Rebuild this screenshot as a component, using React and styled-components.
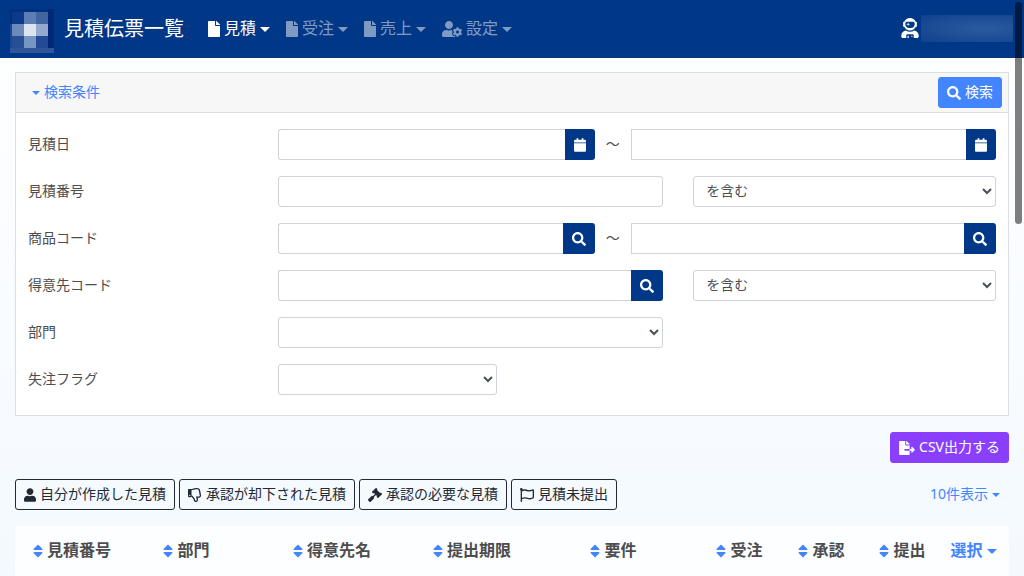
import React from "react";
import styled, { createGlobalStyle, css } from "styled-components";
import {
  FaFile,
  FaUserCog,
  FaUserAstronaut,
  FaSearch,
  FaCalendar,
  FaFileExport,
  FaUser,
  FaRegThumbsDown,
  FaGavel,
  FaRegFlag,
  FaSort,
} from "react-icons/fa";

const navy = "#003787";
const blue = "#4285ff";

const GlobalStyle = createGlobalStyle`
  *, *::before, *::after { box-sizing: border-box; }
  body {
    margin: 0;
    min-height: 100vh;
    background: linear-gradient(#ffffff, #f7fbff 70%, #f3f9fe) no-repeat;
    color: #4d4d4d;
    font-family: "Noto Sans", "Noto Sans CJK JP", sans-serif;
    font-size: 14px;
    line-height: 21px;
  }
  button, input, select { font: inherit; margin: 0; }
  button { cursor: pointer; }
`;

const Navbar = styled.header`
  display: flex;
  align-items: center;
  height: 58px;
  padding: 0 11px 0 10px;
  background: ${navy};
`;

const Brand = styled.a`
  display: flex;
  align-items: center;
  gap: 10px;
  margin-right: 16px;
  padding-top: 4px;
  color: #fff;
  text-decoration: none;
`;

const PageTitle = styled.h1`
  margin: 0;
  padding-bottom: 4px;
  font-size: 20px;
  line-height: 30px;
  font-weight: 400;
`;

const Nav = styled.nav`
  display: flex;
  flex: 1;
`;

const NavItem = styled.button`
  display: flex;
  align-items: center;
  gap: 4px;
  padding: 8px;
  border: 0;
  background: none;
  font-size: 16px;
  line-height: 24px;
  color: ${(p) => (p.$active ? "#fff" : "rgba(255, 255, 255, 0.5)")};
`;

/* Lifts CJK text to sit optically centred beside an icon. */
const Text = styled.span`
  padding-bottom: 2px;
`;

const Caret = styled.span`
  border: solid transparent;
  border-width: ${(p) => (p.$small ? "4px 4px 0" : "5px 5px 0")};
  border-top-color: currentColor;
`;

const IconBox = styled.span`
  display: block;
  flex: none;
  width: ${(p) => p.$w}px;
  height: ${(p) => p.$h}px;

  svg {
    display: block;
    width: 100%;
    height: 100%;
  }
`;

const UserMenu = styled.button`
  display: flex;
  align-items: center;
  gap: 2px;
  padding: 0 0 2px;
  border: 0;
  background: none;
  color: #fff;
`;

const UserName = styled.span`
  width: 92px;
  height: 27px;
  background: radial-gradient(ellipse at 70% 50%, #2a5a9f, #1d4d95 55%, #0d4190);
`;

const Main = styled.main`
  padding: 14px 15px 0;
`;

const Card = styled.form`
  border: 1px solid #dcdfe0;
  background: #fff;
`;

const CardHeader = styled.div`
  display: flex;
  align-items: center;
  justify-content: space-between;
  padding: 4px 6px 4px 7px;
  border-bottom: 1px solid #dcdfe0;
  background: #f7f7f7;
`;

const LinkButton = styled.button`
  display: inline-flex;
  align-items: center;
  gap: 4px;
  padding: 4px 9px;
  border: 0;
  background: none;
  color: ${blue};
  ${(p) =>
    p.$heading &&
    css`
      padding: 0;
      font-size: 16px;
      line-height: 24px;
      font-weight: 700;
    `}
`;

const variants = {
  primary: css`
    border-color: ${blue};
    background: ${blue};
    color: #fff;
  `,
  purple: css`
    border-color: #8a3ffc;
    background: #8a3ffc;
    color: #fff;
  `,
  outline: css`
    border-color: #212934;
    background: transparent;
    color: #212934;
  `,
};

const Button = styled.button`
  display: inline-flex;
  align-items: center;
  gap: 4px;
  height: 31px;
  padding: 0 8px;
  border: 1px solid;
  border-radius: 3px;
  white-space: nowrap;
  ${(p) => variants[p.$variant]}
`;

const Fields = styled.div`
  display: grid;
  gap: 16px;
  padding: 16px 12px 20px;
`;

const FieldRow = styled.div`
  display: grid;
  grid-template-columns: repeat(12, minmax(0, 1fr));
  column-gap: 30px;
  align-items: center;
`;

const Label = styled.label`
  grid-column: span 3;
  padding-bottom: 2px;
`;

const Cell = styled.div`
  display: flex;
  grid-column: span ${(p) => p.$span};
`;

const InputGroup = styled.div`
  display: flex;
  flex: ${(p) => p.$grow || 1} 1 0;
  min-width: 0;
`;

const controlBox = css`
  width: 100%;
  min-width: 0;
  height: 31px;
  padding: 3px 8px 5px;
  border: 1px solid #ced4da;
  border-radius: 3px;
  background: #fff;
  color: #495057;
`;

const TextInput = styled.input`
  ${controlBox}
  ${(p) => p.$joined && "border-right: 0; border-radius: 3px 0 0 3px;"}
  ${(p) => p.$square && "border-radius: 0;"}
`;

const Select = styled.select`
  ${controlBox}
`;

const AddonButton = styled.button`
  display: flex;
  align-items: center;
  padding: 0 9px;
  border: 0;
  border-radius: 0 3px 3px 0;
  background: ${navy};
  color: #fff;
`;

const Tilde = styled.span`
  flex: none;
  width: 36px;
  line-height: 29px;
  text-align: center;
`;

const Actions = styled.div`
  display: flex;
  justify-content: flex-end;
  padding: 16px 0;
`;

const Toolbar = styled.div`
  display: flex;
  align-items: center;
  justify-content: space-between;
  margin-bottom: 16px;
`;

const Filters = styled.div`
  display: flex;
  gap: 4px;
`;

const Table = styled.table`
  width: 100%;
  table-layout: fixed;
  border-collapse: collapse;
  background: rgba(255, 255, 255, 0.8);
`;

const HeadCell = styled.th`
  width: ${(p) => p.$width}px;
  height: 50px;
  padding: 0;
  text-align: center;
  white-space: nowrap;
`;

const SortButton = styled.button`
  display: inline-flex;
  align-items: center;
  gap: 4px;
  padding: 0;
  border: 0;
  background: none;
  color: inherit;
  font-size: 16px;
  line-height: 24px;
  font-weight: 700;

  svg { color: ${blue}; }
`;

const ScrollThumb = styled.div`
  position: fixed;
  top: 2px;
  right: 2px;
  width: 7px;
  height: 222px;
  border-radius: 4px;
  background: rgba(0, 0, 0, 0.5);
`;

const Icon = ({ glyph: Glyph, w, size = 14 }) => (
  <IconBox $w={w} $h={size}>
    <Glyph aria-hidden="true" />
  </IconBox>
);

const Logo = () => (
  <svg width="44" height="44" viewBox="0 0 44 44" shapeRendering="crispEdges" aria-hidden="true">
    <rect width="44" height="44" fill="#00307f" />
    <rect x="2" y="3" width="12" height="12" fill="#0b3a88" />
    <rect x="14" y="3" width="12" height="12" fill="#5c7db3" />
    <rect x="26" y="3" width="12" height="12" fill="#41659f" />
    <rect x="38" y="0" width="6" height="39" fill="#002878" />
    <rect x="2" y="15" width="12" height="12" fill="#6d8abb" />
    <rect x="14" y="15" width="12" height="12" fill="#dbe4f0" />
    <rect x="26" y="15" width="12" height="12" fill="#95a9cf" />
    <rect x="0" y="15" width="2" height="24" fill="#1c4790" />
    <rect x="2" y="27" width="12" height="12" fill="#264f97" />
    <rect x="14" y="27" width="12" height="12" fill="#7895c2" />
    <rect x="26" y="27" width="12" height="12" fill="#234b95" />
    <rect y="39" width="44" height="5" fill="#2f5598" />
  </svg>
);

const navItems = [
  { label: "見積", icon: FaFile, w: 12, active: true },
  { label: "受注", icon: FaFile, w: 12 },
  { label: "売上", icon: FaFile, w: 12 },
  { label: "設定", icon: FaUserCog, w: 20 },
];

const filters = [
  { label: "自分が作成した見積", icon: FaUser, w: 12 },
  { label: "承認が却下された見積", icon: FaRegThumbsDown, w: 14 },
  { label: "承認の必要な見積", icon: FaGavel, w: 14 },
  { label: "見積未提出", icon: FaRegFlag, w: 14 },
];

const columns = [
  ["見積番号", 114],
  ["部門", 115],
  ["得意先名", 176],
  ["提出期限", 104],
  ["要件", 179],
  ["受注", 73],
  ["承認", 91],
  ["提出", 71],
];

const Lookup = ({ id, kind, grow, square, label }) => (
  <InputGroup $grow={grow}>
    <TextInput id={id} type="text" $joined $square={square} aria-label={label} />
    <AddonButton type="button" aria-label={kind === "date" ? "日付を選択" : "検索"}>
      {kind === "date" ? <Icon glyph={FaCalendar} w={12} /> : <Icon glyph={FaSearch} w={14} />}
    </AddonButton>
  </InputGroup>
);

const RangeRow = ({ id, label, kind }) => (
  <FieldRow>
    <Label htmlFor={id}>{label}</Label>
    <Cell $span={9}>
      <Lookup id={id} kind={kind} grow={317} />
      <Tilde>〜</Tilde>
      <Lookup id={`${id}-to`} kind={kind} grow={365} square label={`${label}（終了）`} />
    </Cell>
  </FieldRow>
);

const MatchSelect = ({ label }) => (
  <Cell $span={4}>
    <Select aria-label={label}>
      <option>を含む</option>
    </Select>
  </Cell>
);

export default function App() {
  return (
    <>
      <GlobalStyle />
      <Navbar>
        <Brand href="#">
          <Logo />
          <PageTitle>見積伝票一覧</PageTitle>
        </Brand>
        <Nav>
          {navItems.map((n) => (
            <NavItem key={n.label} type="button" $active={n.active}>
              <Icon glyph={n.icon} w={n.w} size={16} />
              <Text>{n.label}</Text>
              <Caret />
            </NavItem>
          ))}
        </Nav>
        <UserMenu type="button" aria-label="ユーザー">
          <Icon glyph={FaUserAstronaut} w={18} size={20} />
          <UserName />
        </UserMenu>
      </Navbar>

      <Main>
        <Card onSubmit={(e) => e.preventDefault()}>
          <CardHeader>
            <LinkButton type="button">
              <Caret $small />
              <Text>検索条件</Text>
            </LinkButton>
            <Button type="submit" $variant="primary">
              <Icon glyph={FaSearch} w={14} />
              <Text>検索</Text>
            </Button>
          </CardHeader>
          <Fields>
            <RangeRow id="date" label="見積日" kind="date" />
            <FieldRow>
              <Label htmlFor="number">見積番号</Label>
              <Cell $span={5}>
                <TextInput id="number" type="text" />
              </Cell>
              <MatchSelect label="見積番号の条件" />
            </FieldRow>
            <RangeRow id="product" label="商品コード" kind="search" />
            <FieldRow>
              <Label htmlFor="customer">得意先コード</Label>
              <Cell $span={5}>
                <Lookup id="customer" kind="search" />
              </Cell>
              <MatchSelect label="得意先コードの条件" />
            </FieldRow>
            <FieldRow>
              <Label htmlFor="section">部門</Label>
              <Cell $span={5}>
                <Select id="section" />
              </Cell>
            </FieldRow>
            <FieldRow>
              <Label htmlFor="lost">失注フラグ</Label>
              <Cell $span={3}>
                <Select id="lost" />
              </Cell>
            </FieldRow>
          </Fields>
        </Card>

        <Actions>
          <Button type="button" $variant="purple">
            <Icon glyph={FaFileExport} w={16} />
            <Text>CSV出力する</Text>
          </Button>
        </Actions>

        <Toolbar>
          <Filters>
            {filters.map((f) => (
              <Button key={f.label} type="button" $variant="outline">
                <Icon glyph={f.icon} w={f.w} />
                <Text>{f.label}</Text>
              </Button>
            ))}
          </Filters>
          <LinkButton type="button">
            <Text>10件表示</Text>
            <Caret $small />
          </LinkButton>
        </Toolbar>

        <Table>
          <thead>
            <tr>
              {columns.map(([label, width]) => (
                <HeadCell key={label} $width={width} scope="col">
                  <SortButton type="button">
                    <Icon glyph={FaSort} w={10} size={16} />
                    <Text>{label}</Text>
                  </SortButton>
                </HeadCell>
              ))}
              <HeadCell $width={71} scope="col">
                <LinkButton type="button" $heading>
                  <Text>選択</Text>
                  <Caret />
                </LinkButton>
              </HeadCell>
            </tr>
          </thead>
        </Table>
      </Main>
      <ScrollThumb />
    </>
  );
}
